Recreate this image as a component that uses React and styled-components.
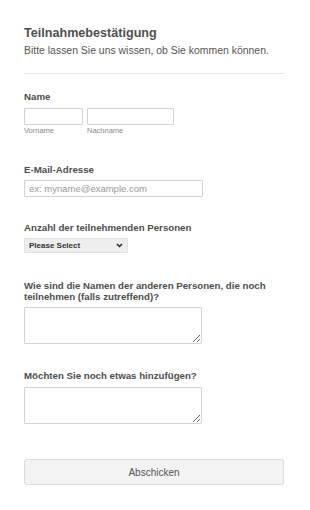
import React from 'react';
import styled, { createGlobalStyle } from 'styled-components';

const GlobalStyle = createGlobalStyle`
  body {
    margin: 0;
    background: #fff;
    font-family: "Liberation Sans", Arial, sans-serif;
  }
`;

const Form = styled.form`
  width: 260px;
  padding: 25px 24px 20px;
  color: #555;
`;

const Header = styled.div`
  padding-bottom: 15px;
  border-bottom: 1px solid #e6e6e6;
  margin-bottom: 17px;
  h1 {
    margin: 0;
    font-size: 12.6px;
    line-height: 16px;
    font-weight: 700;
    color: #505050;
  }
  p {
    margin: 3px 0 0;
    font-size: 10.45px;
    line-height: 14px;
    color: #555;
  }
`;

const Field = styled.div`
  margin-bottom: ${(p) => p.$gap ?? 26}px;
`;

const Label = styled.label`
  display: block;
  font-size: 9.7px;
  line-height: 11px;
  font-weight: 700;
  color: #4d4d4d;
  margin-bottom: ${(p) => p.$gap ?? 5}px;
`;

const Row = styled.div`
  display: flex;
  gap: 4px;
`;

const Sub = styled.div`
  display: flex;
  flex-direction: column;
  span {
    font-size: 7.5px;
    line-height: 10px;
    color: #8a8a8a;
    margin-top: 1px;
  }
`;

const Input = styled.input`
  display: block;
  box-sizing: border-box;
  width: ${(p) => p.$w}px;
  height: 17px;
  margin: 0;
  border: 1px solid #d4d4d4;
  border-radius: 1px;
  padding: 0 4px;
  font-family: "Liberation Sans", Arial, sans-serif;
  font-size: 9.5px;
  color: #555;
  outline: none;
  &::placeholder {
    color: #999;
  }
`;

const SelectWrap = styled.div`
  position: relative;
  width: 104px;
  height: 15px;
  svg {
    position: absolute;
    right: 5px;
    top: 5px;
    pointer-events: none;
  }
`;

const Select = styled.select`
  display: block;
  appearance: none;
  box-sizing: border-box;
  width: 104px;
  height: 15px;
  margin: 0;
  border: 1px solid #e0e0e0;
  background: #eee;
  border-radius: 1px;
  font-family: "Liberation Sans", Arial, sans-serif;
  font-size: 8px;
  font-weight: 700;
  color: #333;
  padding: 0 4px;
  outline: none;
`;

const Area = styled.textarea`
  display: block;
  box-sizing: border-box;
  width: 178px;
  height: 37px;
  border: 1px solid #d4d4d4;
  border-radius: 1px;
  margin: 0;
  outline: none;
  resize: vertical;
`;

const Button = styled.button`
  display: block;
  box-sizing: border-box;
  width: 260px;
  height: 26px;
  margin: 35px 0 0;
  background: #f3f3f3;
  border: 1px solid #dcdcdc;
  border-radius: 3px;
  font-family: "Liberation Sans", Arial, sans-serif;
  font-size: 10px;
  color: #555;
`;

export default function App() {
  return (
    <>
      <GlobalStyle />
      <Form onSubmit={(e) => e.preventDefault()}>
        <Header>
          <h1>Teilnahmebestätigung</h1>
          <p>Bitte lassen Sie uns wissen, ob Sie kommen können.</p>
        </Header>
        <Field $gap={28}>
          <Label $gap={6}>Name</Label>
          <Row>
            <Sub>
              <Input $w={59} />
              <span>Vorname</span>
            </Sub>
            <Sub>
              <Input $w={87} />
              <span>Nachname</span>
            </Sub>
          </Row>
        </Field>
        <Field $gap={25}>
          <Label>E-Mail-Adresse</Label>
          <Input $w={179} placeholder="ex: myname@example.com" />
        </Field>
        <Field $gap={27}>
          <Label>Anzahl der teilnehmenden Personen</Label>
          <SelectWrap>
            <Select defaultValue="">
              <option value="">Please Select</option>
              <option>1</option>
              <option>2</option>
              <option>3</option>
            </Select>
            <svg width="7" height="5" viewBox="0 0 7 5">
              <path d="M1 1l2.5 2.5L6 1" fill="none" stroke="#222" strokeWidth="1.5" />
            </svg>
          </SelectWrap>
        </Field>
        <Field $gap={26}>
          <Label>Wie sind die Namen der anderen Personen, die noch teilnehmen (falls zutreffend)?</Label>
          <Area />
        </Field>
        <Field $gap={0}>
          <Label $gap={6}>Möchten Sie noch etwas hinzufügen?</Label>
          <Area />
        </Field>
        <Button type="submit">Abschicken</Button>
      </Form>
    </>
  );
}
